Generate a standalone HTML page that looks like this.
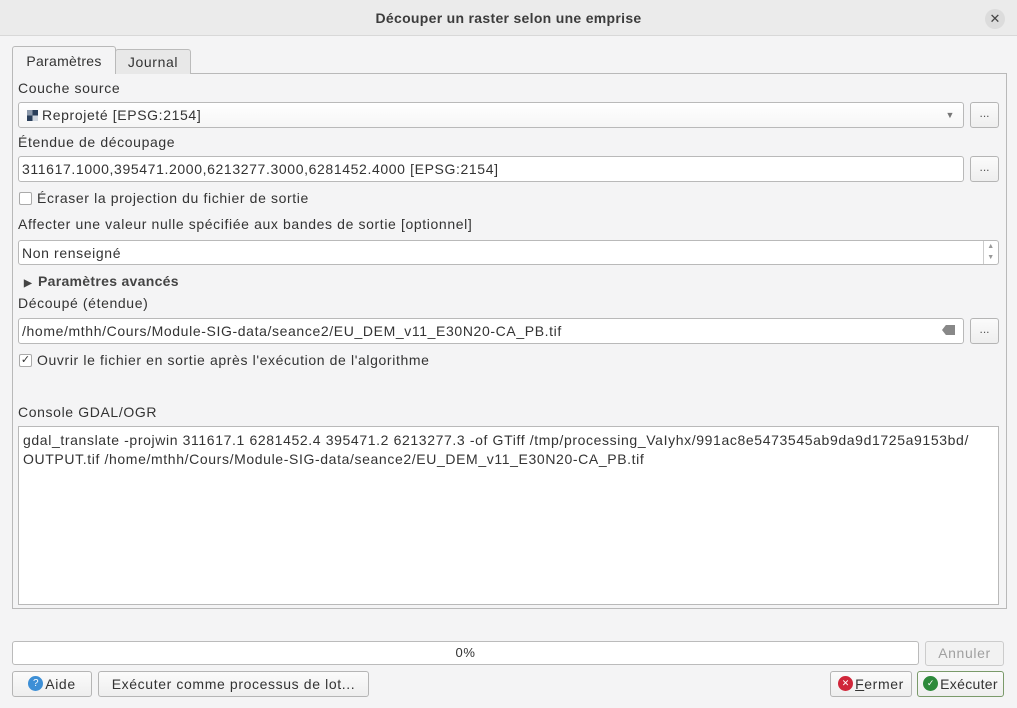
<!DOCTYPE html>
<html><head><meta charset="utf-8"><style>
*{box-sizing:border-box;margin:0;padding:0}
body{width:1017px;height:708px;background:#f4f4f5;font-family:"Liberation Sans",sans-serif;font-size:14px;letter-spacing:0.62px;color:#333;position:relative;overflow:hidden}
.a{position:absolute}
.title{left:0;top:0;width:1017px;height:36px;background:#ebebeb;border-bottom:1px solid #d8d8d8;text-align:center;line-height:36px;font-size:14px;font-weight:bold;letter-spacing:0.3px;color:#3c3c3c}
.lbl{left:18px;line-height:18px;color:#333}
.inp{background:#fff;border:1px solid #b9b9b9;border-radius:3px;height:26px;line-height:24px;padding-left:3px;color:#333;white-space:nowrap}
.btn{background:linear-gradient(#fbfbfb,#eeeeee);border:1px solid #b5b5b5;border-radius:3px;text-align:center;color:#333;white-space:nowrap}
.dots{width:29px;height:26px;line-height:20px;font-size:12px;color:#555;letter-spacing:0}
.cb{width:13px;height:13px;border:1px solid #aaa;background:#fff;border-radius:2px}
.ic{display:inline-block;width:15px;height:15px;border-radius:8px;color:#fff;font-size:9px;line-height:15px;vertical-align:middle;margin-top:-3px;margin-right:2px;letter-spacing:0;text-align:center}
</style></head><body>
<div class="a title">Découper un raster selon une emprise</div>
<div class="a" style="left:985px;top:9px;width:20px;height:20px;border-radius:10px;background:#dcdcdc;text-align:center;line-height:20px;font-size:13px;color:#444;letter-spacing:0">✕</div>

<div class="a" style="left:12px;top:73px;width:995px;height:536px;border:1px solid #b9b9b9;background:#f4f4f5"></div>
<div class="a" style="left:115px;top:49px;width:76px;height:25px;border:1px solid #bbb;border-bottom:none;background:#e8e8e8;border-radius:3px 3px 0 0;text-align:center;line-height:24px">Journal</div>
<div class="a" style="left:12px;top:46px;width:104px;height:28px;border:1px solid #b9b9b9;border-bottom:none;background:#f4f4f5;border-radius:3px 3px 0 0;text-align:center;line-height:28px;letter-spacing:0.3px">Paramètres</div>

<div class="a lbl" style="top:79px">Couche source</div>
<div class="a inp" style="left:18px;top:102px;width:946px;background:linear-gradient(#fff,#f6f6f6)">
<span style="display:inline-block;width:11px;height:11px;margin:0 4px 0 5px;vertical-align:-1px;background:conic-gradient(#2a3f5a 0 25%,#cfd6df 0 50%,#2a3f5a 0 75%,#8b98aa 0)"></span>Reprojeté [EPSG:2154]
<span class="a" style="right:8px;top:0;font-size:9px;color:#777">▼</span></div>
<div class="a btn dots" style="left:970px;top:102px">...</div>

<div class="a lbl" style="top:133px">Étendue de découpage</div>
<div class="a inp" style="left:18px;top:156px;width:946px">311617.1000,395471.2000,6213277.3000,6281452.4000 [EPSG:2154]</div>
<div class="a btn dots" style="left:970px;top:156px">...</div>

<div class="a cb" style="left:19px;top:192px"></div>
<div class="a" style="left:37px;top:189px;line-height:18px">Écraser la projection du fichier de sortie</div>

<div class="a lbl" style="top:215px">Affecter une valeur nulle spécifiée aux bandes de sortie [optionnel]</div>
<div class="a inp" style="left:18px;top:240px;width:981px;height:25px">Non renseigné
<span class="a" style="right:0;top:0;width:15px;height:23px;border-left:1px solid #ccc;font-size:7px;line-height:11px;text-align:center;color:#999">▲<br>▼</span></div>

<div class="a" style="left:24px;top:272px;line-height:18px;font-weight:bold;color:#444;letter-spacing:0.3px"><span style="font-size:10px;margin-right:6px">▶</span>Paramètres avancés</div>

<div class="a lbl" style="top:294px">Découpé (étendue)</div>
<div class="a inp" style="left:18px;top:318px;width:946px">/home/mthh/Cours/Module-SIG-data/seance2/EU_DEM_v11_E30N20-CA_PB.tif
<span class="a" style="right:8px;top:6px;width:13px;height:10px;background:#888;clip-path:polygon(30% 0,100% 0,100% 100%,30% 100%,0 50%)"></span></div>
<div class="a btn dots" style="left:970px;top:318px">...</div>

<div class="a cb" style="left:19px;top:354px;font-size:11px;line-height:11px;text-align:center;color:#333;letter-spacing:0">✓</div>
<div class="a" style="left:37px;top:351px;line-height:18px">Ouvrir le fichier en sortie après l'exécution de l'algorithme</div>

<div class="a lbl" style="top:403px">Console GDAL/OGR</div>
<div class="a" style="left:18px;top:426px;width:981px;height:179px;background:#fff;border:1px solid #b9b9b9;padding:4px 4px;line-height:19px;white-space:nowrap">gdal_translate -projwin 311617.1 6281452.4 395471.2 6213277.3 -of GTiff /tmp/processing_VaIyhx/991ac8e5473545ab9da9d1725a9153bd/<br>OUTPUT.tif /home/mthh/Cours/Module-SIG-data/seance2/EU_DEM_v11_E30N20-CA_PB.tif</div>

<div class="a" style="left:12px;top:641px;width:907px;height:24px;background:#fff;border:1px solid #bbb;border-radius:3px;text-align:center;line-height:22px;font-size:13px">0%</div>
<div class="a btn" style="left:925px;top:641px;width:79px;height:25px;line-height:23px;color:#a0a0a0;background:#f2f2f2;border-color:#ccc">Annuler</div>

<div class="a btn" style="left:12px;top:671px;width:80px;height:26px;line-height:24px"><span class="ic" style="background:#3d8fd6;font-size:10px">?</span>Aide</div>
<div class="a btn" style="left:98px;top:671px;width:271px;height:26px;line-height:24px">Exécuter comme processus de lot...</div>
<div class="a btn" style="left:830px;top:671px;width:82px;height:26px;line-height:24px"><span class="ic" style="background:#d0263a">✕</span><u>F</u>ermer</div>
<div class="a btn" style="left:917px;top:671px;width:87px;height:26px;line-height:24px;border-color:#7a9a6a;letter-spacing:0.3px"><span class="ic" style="background:#2d8a3a">✓</span>Exécuter</div>
</body></html>
